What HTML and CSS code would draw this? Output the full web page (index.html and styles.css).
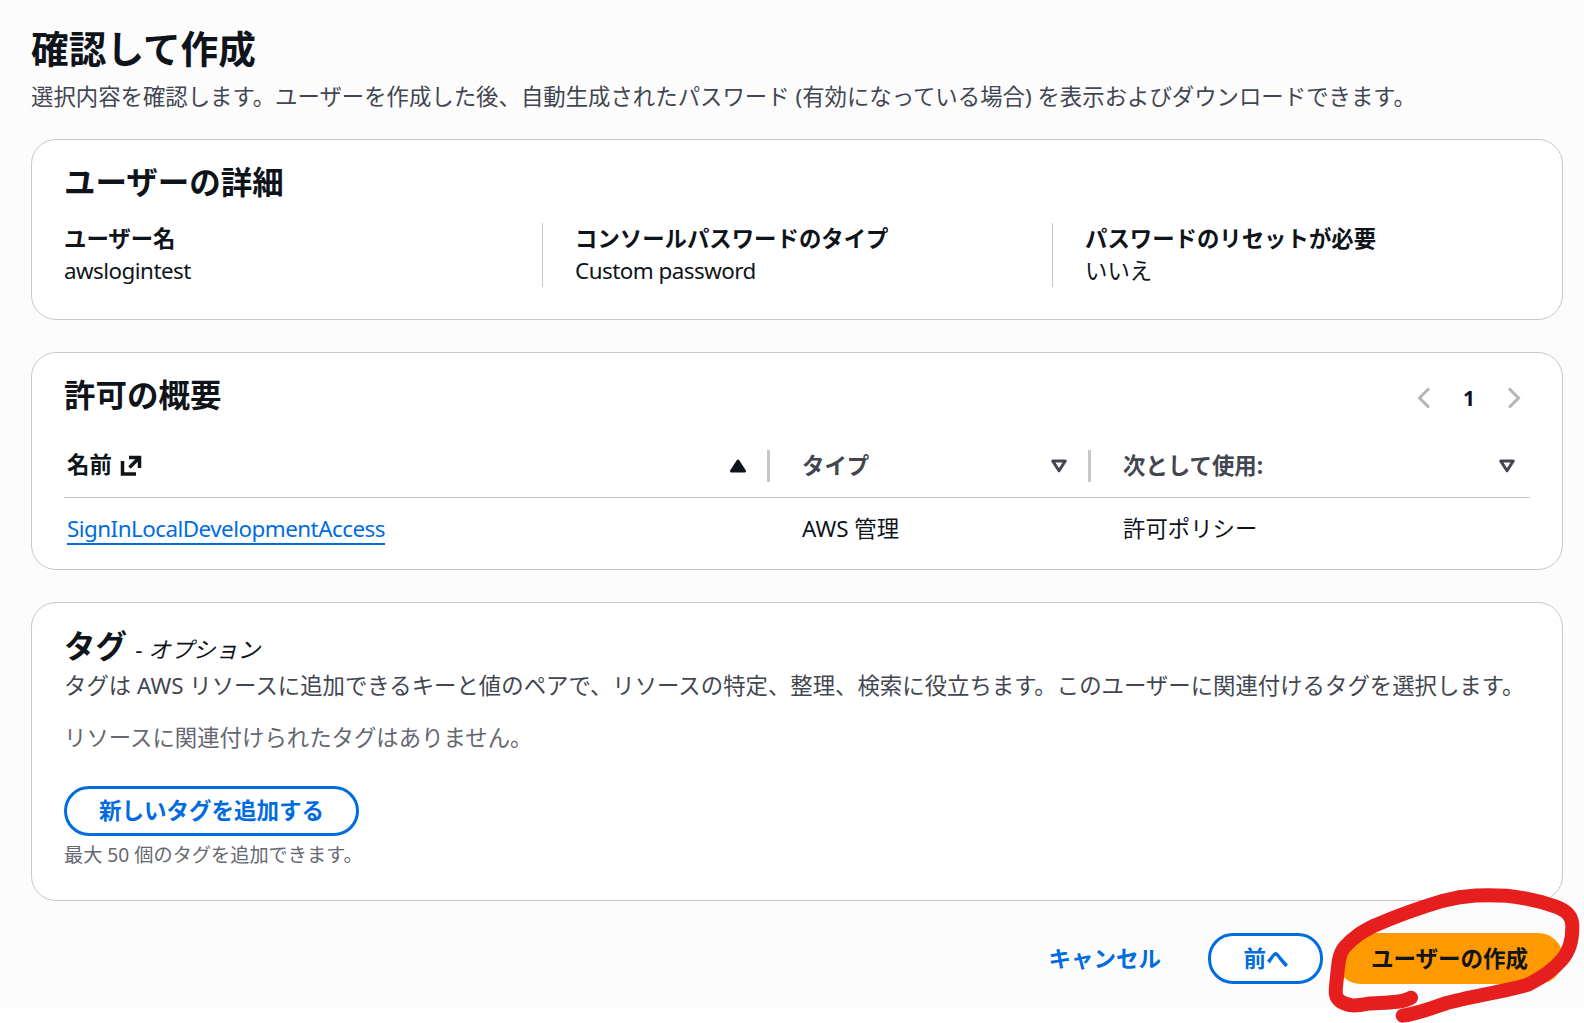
FILE: index.html
```
<!DOCTYPE html>
<html lang="ja">

<head>
    <meta charset="utf-8">
    <title>確認して作成</title>
    <link rel="stylesheet" href="styles.css">
</head>

<body>
    <main class="page">
        <!-- Page title -->
        <header class="page-header">
            <h1>確認して作成</h1>
            <p>選択内容を確認します。ユーザーを作成した後、自動生成されたパスワード (有効になっている場合) を表示およびダウンロードできます。</p>
        </header>

        <!-- User details -->
        <section class="card details">
            <h2>ユーザーの詳細</h2>
            <dl class="columns">
                <div class="column">
                    <dt>ユーザー名</dt>
                    <dd class="latin">awslogintest</dd>
                </div>
                <div class="column">
                    <dt>コンソールパスワードのタイプ</dt>
                    <dd class="latin">Custom password</dd>
                </div>
                <div class="column">
                    <dt>パスワードのリセットが必要</dt>
                    <dd>いいえ</dd>
                </div>
            </dl>
        </section>

        <!-- Permissions summary -->
        <section class="card permissions">
            <div class="card-header">
                <h2>許可の概要</h2>
                <div class="pagination">
                    <svg width="14" height="22" viewBox="0 0 14 22"><path d="M12 1.5 2.5 11l9.5 9.5"/></svg>
                    <span>1</span>
                    <svg width="14" height="22" viewBox="0 0 14 22"><path d="M2 1.5 11.5 11 2 20.5"/></svg>
                </div>
            </div>
            <div class="table">
                <div class="row head">
                    <div class="cell sorted">
                        <span>名前</span>
                        <svg class="external" width="22" height="22" viewBox="0 0 22 22"><path d="M2.5 6v13H16M9 2.500h10.500V13M19 3 9.500 12.500"/></svg>
                        <svg class="sort" width="18" height="16" viewBox="0 0 18 16"><path class="filled" d="M9 3 15.500 13h-13z"/></svg>
                    </div>
                    <div class="cell">
                        <span>タイプ</span>
                        <svg class="sort" width="18" height="16" viewBox="0 0 18 16"><path d="M2.700 3h12.600L9 12.800z"/></svg>
                    </div>
                    <div class="cell">
                        <span>次として使用:</span>
                        <svg class="sort" width="18" height="16" viewBox="0 0 18 16"><path d="M2.700 3h12.600L9 12.800z"/></svg>
                    </div>
                </div>
                <div class="row">
                    <div class="cell"><a href="#" class="latin policy">SignInLocalDevelopmentAccess</a></div>
                    <div class="cell">AWS 管理</div>
                    <div class="cell">許可ポリシー</div>
                </div>
            </div>
        </section>

        <!-- Tags -->
        <section class="card tags">
            <h2>タグ <span class="optional">- <i>オプション</i></span></h2>
            <p class="description">タグは AWS リソースに追加できるキーと値のペアで、リソースの特定、整理、検索に役立ちます。このユーザーに関連付けるタグを選択します。</p>
            <p class="empty">リソースに関連付けられたタグはありません。</p>
            <button class="btn">新しいタグを追加する</button>
            <p class="hint">最大 50 個のタグを追加できます。</p>
        </section>

        <!-- Actions -->
        <footer class="actions">
            <button class="btn link">キャンセル</button>
            <button class="btn">前へ</button>
            <button class="btn primary">ユーザーの作成</button>
            <svg class="marker" width="284" height="153" viewBox="0 0 852 459">
                <path d="M333 383C305 402 235 397 205 401C165 409 148 409 121 394C102 380 107 361 110 330C115 285 115 253 134 231C160 201 185 186 225 166C290 138 370 110 430 92C500 74 555 74 620 77C680 83 730 97 765 109C803 124 815 138 817 165C818 210 808 245 785 270C758 302 720 325 690 341C655 358 540 372 440 399C410 409 360 430 308 437"/>
            </svg>
        </footer>
    </main>
</body>

</html>
```
FILE: styles.css
```
* {
    box-sizing: border-box;
}

body {
    min-height: 100vh;
    margin: 0;
    background-color: #fff;
    color: #0f141a;
    font-family: "Noto Sans", "Noto Sans CJK JP", sans-serif;
    font-size: 22.4px;
    line-height: 32px;
}

h1, h2, p, dl, dd {
    margin: 0;
}

svg {
    fill: none;
    flex-shrink: 0;
}

.page {
    height: 1008px;
    padding: 26px 21px 0 31px;
    background-color: #fcfcfd;
}

.page-header {
    height: 113px;
    white-space: nowrap;
}

h1 {
    font-size: 37.7px;
    line-height: 46px;
}

.page-header p {
    margin-top: 9px;
    color: #424650;
}

h2 {
    font-size: 31.5px;
    line-height: 40px;
}

.latin {
    letter-spacing: -0.52px;
}

.card {
    padding: 22px 32px 0;
    background-color: #fff;
    border: 1px solid #c6c6cd;
    border-radius: 25px;
}

/* User details */
.details {
    height: 181px;
}

.columns {
    display: grid;
    grid-template-columns: 478px 510px 1fr;
    margin-top: 21px;
}

.column + .column {
    padding-left: 32px;
    border-left: 1px solid #c6c6cd;
}

dt {
    font-weight: bold;
}

/* Permissions table */
.permissions {
    height: 218px;
    margin-top: 32px;
}

.card-header {
    display: flex;
    justify-content: space-between;
    align-items: center;
}

.pagination {
    display: flex;
    align-items: center;
    gap: 32px;
    padding: 5px 9px 0 0;
    font-size: 21px;
    font-weight: bold;
}

.pagination svg {
    stroke: #b4b4bb;
    stroke-width: 3;
}

.table {
    margin-top: 35px;
}

.row {
    display: grid;
    grid-template-columns: 706px 321px 1fr;
    padding-top: 15px;
}

.row.head {
    padding: 0 0 15px;
    border-bottom: 1px solid #c6c6cd;
    color: #424650;
    font-weight: bold;
}

.cell {
    display: flex;
    align-items: center;
    height: 32px;
    padding-left: 32px;
}

.cell:first-child {
    padding-left: 3px;
}

.head .cell {
    padding-right: 20px;
}

.head .cell:not(:last-child) {
    border-right: 3px solid #c6c6cd;
}

.head .cell:last-child {
    padding-right: 14px;
}

.head svg {
    stroke: #424650;
    stroke-width: 3;
    stroke-linejoin: round;
}

.head .sorted {
    color: #0f141a;
}

.sorted span {
    padding-bottom: 2px;
}

.head .sorted svg {
    stroke: #0f141a;
}

.head .external {
    margin-left: 8px;
    stroke-width: 3.5;
    stroke-linejoin: miter;
}

.sort {
    margin-left: auto;
}

.filled {
    fill: #0f141a;
}

.policy {
    height: 32px;
    border-bottom: 2px solid #006ce0;
    color: #006ce0;
    text-decoration: none;
}

/* Tags */
.tags {
    height: 299px;
    margin-top: 32px;
    padding-top: 23px;
}

.optional {
    font-size: 22.4px;
    font-weight: normal;
}

.description {
    color: #424650;
    white-space: nowrap;
}

.empty {
    margin: 20px 0 32px;
    color: #656871;
}

.hint {
    margin-top: 4px;
    color: #656871;
    font-size: 19.2px;
    line-height: 30px;
}

/* Buttons */
.btn {
    display: block;
    height: 50px;
    padding: 0 32px;
    background-color: #fff;
    border: 3px solid #006ce0;
    border-radius: 25px;
    color: #006ce0;
    font: bold 22.5px/32px "Noto Sans", "Noto Sans CJK JP", sans-serif;
    white-space: nowrap;
}

.actions {
    position: relative;
    display: flex;
    justify-content: flex-end;
    gap: 12.5px;
    padding-top: 32px;
}

.actions .btn {
    height: 51px;
}

.actions .link {
    background-color: transparent;
    border-color: transparent;
}

.actions .primary {
    background-color: #ff9900;
    border-color: #ff9900;
    color: #0f141a;
}

/* Hand-drawn ring over the create button */
.marker {
    position: absolute;
    top: -31px;
    right: -21px;
    stroke: #e61e1e;
    stroke-width: 42;
    stroke-linecap: round;
    stroke-linejoin: round;
}
```
